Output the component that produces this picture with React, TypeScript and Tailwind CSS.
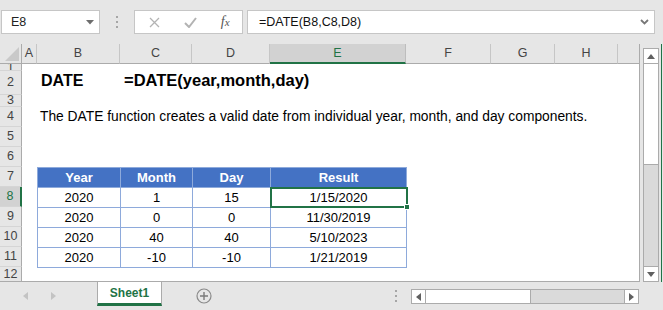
import React from 'react';

const font = { fontFamily: '"Liberation Sans", Arial, sans-serif' };

const cols = [
  { id: 'A', w: 'w-[15px]' },
  { id: 'B', w: 'w-[83px]' },
  { id: 'C', w: 'w-[72px]' },
  { id: 'D', w: 'w-[78px]' },
  { id: 'E', w: 'w-[136px]' },
  { id: 'F', w: 'w-[85px]' },
  { id: 'G', w: 'w-[64px]' },
  { id: 'H', w: 'w-[63px]' },
];

const rows = [
  { n: '1', h: 'h-[7px]' },
  { n: '2', h: 'h-[24px]' },
  { n: '3', h: 'h-[12px]' },
  { n: '4', h: 'h-[20px]' },
  { n: '5', h: 'h-[20px]' },
  { n: '6', h: 'h-[20px]' },
  { n: '7', h: 'h-[20px]' },
  { n: '8', h: 'h-[20px]' },
  { n: '9', h: 'h-[20px]' },
  { n: '10', h: 'h-[20px]' },
  { n: '11', h: 'h-[20px]' },
  { n: '12', h: 'h-[15px]' },
];

const data = [
  ['2020', '1', '15', '1/15/2020'],
  ['2020', '0', '0', '11/30/2019'],
  ['2020', '40', '40', '5/10/2023'],
  ['2020', '-10', '-10', '1/21/2019'],
];

function VDots() {
  return (
    <div className="flex flex-col gap-[3px]">
      <div className="w-[2px] h-[2px] bg-[#a6a6a6]" />
      <div className="w-[2px] h-[2px] bg-[#a6a6a6]" />
      <div className="w-[2px] h-[2px] bg-[#a6a6a6]" />
    </div>
  );
}

function FormulaBar() {
  return (
    <div className="h-[44px] flex items-start pt-[10px]">
      {/* name box */}
      <div className="ml-[1px] w-[99px] h-[24px] bg-white border border-[#c6c6c6] flex items-center justify-between pl-[9px] pr-[5px]">
        <span className="text-[12.5px] text-[#222]">E8</span>
        <svg width="8" height="5" viewBox="0 0 8 5"><path d="M0 0h8L4 4.5z" fill="#6d6d6d" /></svg>
      </div>
      <div className="w-[34px] h-[24px] flex items-center justify-center">
        <VDots />
      </div>
      {/* cancel / enter / fx */}
      <div className="w-[109px] h-[24px] bg-white border border-[#c6c6c6] flex items-center">
        <div className="w-[38px] flex justify-center pl-[2px]">
          <svg width="11" height="11" viewBox="0 0 11 11"><path d="M1 1l9 9M10 1l-9 9" stroke="#b3b3b3" strokeWidth="1.3" /></svg>
        </div>
        <div className="w-[36px] flex justify-center">
          <svg width="13" height="11" viewBox="0 0 13 11"><path d="M1 6l4 4 7-9" stroke="#b3b3b3" strokeWidth="2" fill="none" /></svg>
        </div>
        <div className="w-[34px] flex justify-center">
          <span className="italic text-[14px] text-[#555] leading-none" style={{ fontFamily: '"Liberation Serif", serif' }}>
            f<span className="text-[11px]">x</span>
          </span>
        </div>
      </div>
      <div className="ml-[4px] w-[408px] h-[24px] bg-white border border-[#c6c6c6] flex items-center justify-between pl-[11px] pr-[5px]">
        <span className="text-[12.5px] text-[#111]">=DATE(B8,C8,D8)</span>
        <svg width="9" height="6" viewBox="0 0 9 6"><path d="M1 1l3.5 3.5L8 1" stroke="#777" strokeWidth="1.8" fill="none" /></svg>
      </div>
    </div>
  );
}

function ColumnHeaders() {
  return (
    <div className="h-[20px] flex text-[12.5px] text-[#444]">
      <div className="w-[22px] h-full border-r border-b border-[#ababab] flex items-end justify-end pr-[2px] pb-[2px]">
        <svg width="14" height="14" viewBox="0 0 14 14"><path d="M14 0v14H0z" fill="#c9c9c9" /></svg>
      </div>
      {cols.map((c) =>
        c.id === 'E' ? (
          <div key={c.id} className={`${c.w} h-full bg-[#d2d2d2] border-r border-[#bdbdbd] border-b-2 border-b-[#217346] text-[#217346] flex items-center justify-center`}>
            {c.id}
          </div>
        ) : (
          <div key={c.id} className={`${c.w} h-full border-r border-[#c6c6c6] border-b border-b-[#ababab] flex items-center justify-center`}>
            {c.id}
          </div>
        )
      )}
      <div className="flex-1 h-full border-b border-[#ababab]" />
    </div>
  );
}

function RowHeaders() {
  return (
    <div className="w-[22px] flex flex-col text-[12.5px] text-[#444]">
      {rows.map((r) =>
        r.n === '8' ? (
          <div key={r.n} className={`${r.h} shrink-0 bg-[#d2d2d2] border-b border-[#d5d5d5] border-r-2 border-r-[#217346] text-[#217346] flex items-center justify-center overflow-hidden`}>
            {r.n}
          </div>
        ) : (
          <div key={r.n} className={`${r.h} shrink-0 border-b border-[#d5d5d5] border-r border-r-[#ababab] flex items-center justify-center overflow-hidden leading-none`}>
            {r.n}
          </div>
        )
      )}
    </div>
  );
}

function SheetContent() {
  return (
    <div className="flex-1 bg-white flex flex-col text-black overflow-hidden">
      <div className="h-[7px] shrink-0" />
      <div className="h-[24px] shrink-0 flex items-end pb-[2px] pl-[19px] font-bold">
        <span className="w-[83px] text-[16px]">DATE</span>
        <span className="text-[16.5px]">=DATE(year,month,day)</span>
      </div>
      <div className="h-[12px] shrink-0" />
      <div className="h-[20px] shrink-0 flex items-center pl-[18px] text-[13.8px] pt-[1px]">
        The DATE function creates a valid date from individual year, month, and day components.
      </div>
      <div className="h-[40px] shrink-0" />
      <table className="ml-[15px] w-[369px] border-collapse text-[13px] leading-[16px] table-fixed">
        <colgroup>
          <col className="w-[83px]" />
          <col className="w-[72px]" />
          <col className="w-[78px]" />
          <col className="w-[136px]" />
        </colgroup>
        <thead>
          <tr className="h-[20px] bg-[#4472c4] text-white font-bold">
            {['Year', 'Month', 'Day', 'Result'].map((h) => (
              <th key={h} className="h-[20px] border border-[#8eaadb] p-0 font-bold text-center align-middle">{h}</th>
            ))}
          </tr>
        </thead>
        <tbody>
          {data.map((row, i) => (
            <tr key={i} className="h-[20px]">
              {row.map((v, j) => (
                <td key={j} className="h-[20px] border border-[#8eaadb] p-0 text-center align-middle relative">
                  {v}
                  {i === 0 && j === 3 && (
                    <div className="absolute -left-[1px] -top-[1px] -right-[2px] -bottom-[1px] border-2 border-[#217346]">
                      <div className="absolute -right-[4px] -bottom-[4px] w-[6px] h-[6px] bg-[#217346] border border-white" />
                    </div>
                  )}
                </td>
              ))}
            </tr>
          ))}
        </tbody>
      </table>
    </div>
  );
}

function VScroll() {
  return (
    <div className="w-[16px] mt-[4px] flex flex-col border border-[#ababab] bg-[#dadada]">
      <div className="h-[15px] bg-white border-b border-[#ababab] flex items-center justify-center">
        <svg width="8" height="5" viewBox="0 0 8 5"><path d="M0 5h8L4 0z" fill="#606060" /></svg>
      </div>
      <div className="h-[101px] bg-white border-b border-[#ababab]" />
      <div className="flex-1" />
      <div className="h-[15px] bg-white border-t border-[#ababab] flex items-center justify-center">
        <svg width="8" height="5" viewBox="0 0 8 5"><path d="M0 0h8L4 5z" fill="#606060" /></svg>
      </div>
    </div>
  );
}

function TabBar() {
  return (
    <div className="h-[28px] flex items-start">
      <div className="w-[97px] h-[28px] flex items-center pl-[23px] gap-[23px]">
        <svg width="5" height="8" viewBox="0 0 5 8"><path d="M5 0v8L0 4z" fill="#c3c3c3" /></svg>
        <svg width="5" height="8" viewBox="0 0 5 8"><path d="M0 0v8l5-4z" fill="#c3c3c3" /></svg>
      </div>
      <div className="w-[65px] h-[24px] bg-white border-l border-r border-[#ababab] border-b-[3px] border-b-[#217346] flex items-center justify-center text-[12px] font-bold text-[#217346]">
        Sheet1
      </div>
      <div className="ml-[34px] h-[28px] flex items-center">
        <svg width="16" height="16" viewBox="0 0 16 16">
          <circle cx="8" cy="8" r="7" fill="none" stroke="#8a8a8a" strokeWidth="1.2" />
          <path d="M8 4v8M4 8h8" stroke="#7a7a7a" strokeWidth="1.4" />
        </svg>
      </div>
      <div className="ml-[183px] h-[28px] flex items-center">
        <VDots />
      </div>
      <div className="ml-[14px] mt-[7px] w-[228px] h-[15px] flex border border-[#ababab] bg-[#dadada]">
        <div className="w-[14px] h-full bg-white border-r border-[#ababab] flex items-center justify-center">
          <svg width="5" height="8" viewBox="0 0 5 8"><path d="M5 0v8L0 4z" fill="#606060" /></svg>
        </div>
        <div className="w-[105px] h-full bg-white border-r border-[#ababab]" />
        <div className="flex-1" />
        <div className="w-[14px] h-full bg-white border-l border-[#ababab] flex items-center justify-center">
          <svg width="5" height="8" viewBox="0 0 5 8"><path d="M0 0v8l5-4z" fill="#606060" /></svg>
        </div>
      </div>
    </div>
  );
}

export default function App() {
  return (
    <div className="w-[663px] h-[310px] bg-[#e6e6e6] flex flex-col overflow-hidden" style={font}>
      <FormulaBar />
      <div className="h-[238px] flex">
        <div className="w-[640px] flex flex-col border-r border-b border-[#ababab]">
          <ColumnHeaders />
          <div className="flex-1 flex overflow-hidden">
            <RowHeaders />
            <SheetContent />
          </div>
        </div>
        <div className="w-[3px]" />
        <VScroll />
        <div className="w-[2px]" />
        <div className="w-[1px] bg-[#217346]" />
      </div>
      <TabBar />
    </div>
  );
}
